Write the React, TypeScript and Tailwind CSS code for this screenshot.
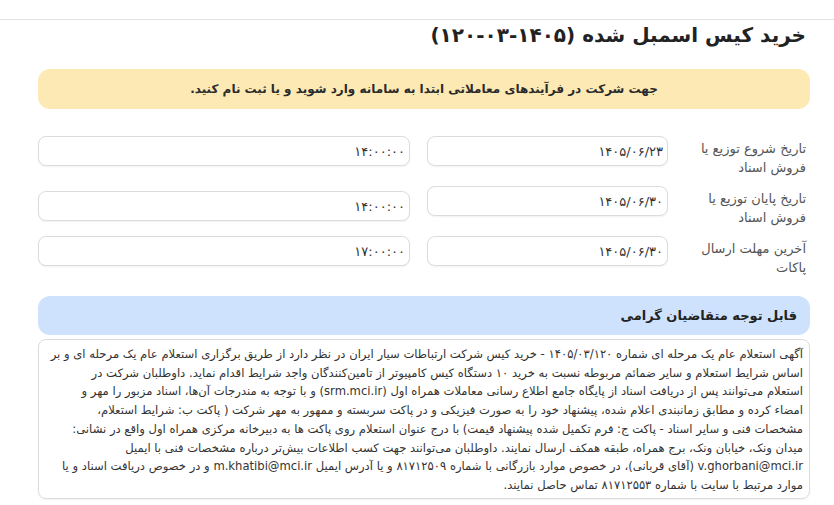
const dates = [
  { label: ['تاریخ شروع توزیع یا', 'فروش اسناد'], date: '۱۴۰۵/۰۶/۲۳', time: '۱۴:۰۰:۰۰', timeOffset: '' },
  { label: ['تاریخ پایان توزیع یا', 'فروش اسناد'], date: '۱۴۰۵/۰۶/۳۰', time: '۱۴:۰۰:۰۰', timeOffset: 'mt-[5px]' },
  { label: ['آخرین مهلت ارسال', 'پاکات'], date: '۱۴۰۵/۰۶/۳۰', time: '۱۷:۰۰:۰۰', timeOffset: '' },
]

const noticeLines = [
  'آگهی استعلام عام یک مرحله ای شماره ۱۴۰۵/۰۳/۱۲۰ - خرید کیس شرکت ارتباطات سیار ایران در نظر دارد از طریق برگزاری استعلام عام یک مرحله ای و بر',
  'اساس شرایط استعلام و سایر ضمائم مربوطه نسبت به خرید ۱۰ دستگاه کیس کامپیوتر از تامین‌کنندگان واجد شرایط اقدام نماید. داوطلبان شرکت در',
  'استعلام می‌توانند پس از دریافت اسناد از پایگاه جامع اطلاع رسانی معاملات همراه اول (srm.mci.ir) و با توجه به مندرجات آن‌ها، اسناد مزبور را مهر و',
  'امضاء کرده و مطابق زمانبندی اعلام شده، پیشنهاد خود را به صورت فیزیکی و در پاکت سربسته و ممهور به مهر شرکت ( پاکت ب: شرایط استعلام،',
  'مشخصات فنی و سایر اسناد - پاکت ج: فرم تکمیل شده پیشنهاد قیمت) با درج عنوان استعلام روی پاکت ها به دبیرخانه مرکزی همراه اول واقع در نشانی:',
  'میدان ونک، خیابان ونک، برج همراه، طبقه همکف ارسال نمایند. داوطلبان می‌توانند جهت کسب اطلاعات بیش‌تر درباره مشخصات فنی با ایمیل',
  'v.ghorbani@mci.ir (آقای قربانی)، در خصوص موارد بازرگانی با شماره ۸۱۷۱۲۵۰۹ و یا آدرس ایمیل m.khatibi@mci.ir و در خصوص دریافت اسناد و یا',
  'موارد مرتبط با سایت با شماره ۸۱۷۱۲۵۵۳ تماس حاصل نمایند.',
]

function ValueBox({ value, className = '' }: { value: string; className?: string }) {
  return (
    <input
      readOnly
      value={value}
      className={`h-[30px] rounded-lg border border-[#dcdcdc] bg-white pr-1 text-right text-[13px] text-[#333] shadow-[0_1px_2px_rgba(0,0,0,0.06)] outline-none ${className}`}
    />
  )
}

export default function App() {
  return (
    <div dir="rtl" className="min-h-screen bg-white font-['DejaVu_Sans',sans-serif] text-[#212529]">
      <div className="h-5 border-b border-[#e2e2e2]" />

      <div className="pl-[38px] pr-6">
        <h1 className="pr-1 text-[20px] font-bold leading-[30px] text-[#222]">
          خرید کیس اسمبل شده <span dir="ltr">(۱۲۰-۰۳-۱۴۰۵)</span>
        </h1>

        <div className="mt-[19px] flex h-10 items-center justify-center rounded-xl bg-[#fde9b4] text-[12px] font-bold text-[#2b2b2b]">
          جهت شرکت در فرآیندهای معاملاتی ابتدا به سامانه وارد شوید و یا ثبت نام کنید.
        </div>

        <div className="mt-[27px] flex flex-col">
          {dates.map((row) => (
            <div key={row.label[0]} className="flex h-[50px] items-start">
              <div className="w-[142px] pr-1 pt-[3px] text-[13px] leading-[19px] text-[#555]">
                {row.label[0]}
                <br />
                {row.label[1]}
              </div>
              <ValueBox value={row.date} className="w-[241px]" />
              <div className="w-[17px]" />
              <ValueBox value={row.time} className={`flex-1 ${row.timeOffset}`} />
            </div>
          ))}
        </div>

        <div className="mt-[10px] flex h-[39px] items-center rounded-xl bg-[#cfe2fd] pr-[13px] text-[13px] font-bold text-[#222]">
          قابل توجه متقاضیان گرامی
        </div>

        <div className="mt-1 h-[160px] rounded-lg border border-[#dcdcdc] px-1.5 pt-[5px] text-[11.6px] leading-[18.7px] text-[#333] shadow-[0_1px_2px_rgba(0,0,0,0.06)]">
          {noticeLines.map((line) => (
            <div key={line} className="whitespace-nowrap">
              {line}
            </div>
          ))}
        </div>
      </div>
    </div>
  )
}
